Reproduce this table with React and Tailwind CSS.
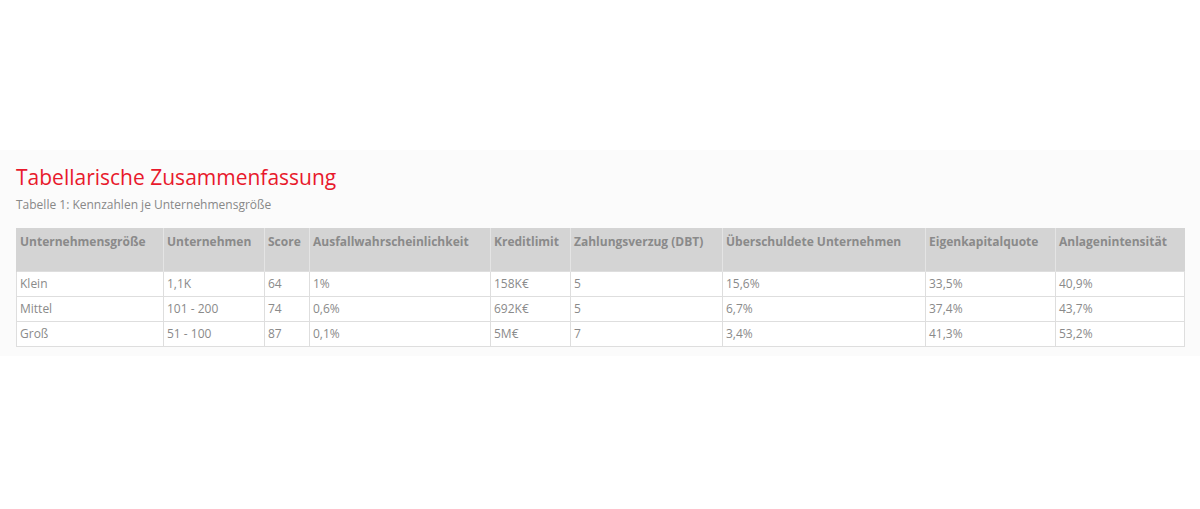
import React from 'react';

const cols = [
  { label: 'Unternehmensgröße', w: 'w-[147px]' },
  { label: 'Unternehmen', w: 'w-[101px]' },
  { label: 'Score', w: 'w-[45px]' },
  { label: 'Ausfallwahrscheinlichkeit', w: 'w-[181px]' },
  { label: 'Kreditlimit', w: 'w-[80px]' },
  { label: 'Zahlungsverzug (DBT)', w: 'w-[152px]' },
  { label: 'Überschuldete Unternehmen', w: 'w-[203px]' },
  { label: 'Eigenkapitalquote', w: 'w-[130px]' },
  { label: 'Anlagenintensität', w: 'w-[129px]' },
];

const rows = [
  ['Klein', '1,1K', '64', '1%', '158K€', '5', '15,6%', '33,5%', '40,9%'],
  ['Mittel', '101 - 200', '74', '0,6%', '692K€', '5', '6,7%', '37,4%', '43,7%'],
  ['Groß', '51 - 100', '87', '0,1%', '5M€', '7', '3,4%', '41,3%', '53,2%'],
];

const App = () => {
  return (
    <div className="w-[1200px] h-[509px] bg-white font-['Open_Sans',sans-serif] pt-[150px]">
      <div className="bg-[#fbfbfb] px-4 pt-[12px] pb-[9px]">
        <h2 className="text-[21px] leading-[30px] text-[#e8192c]">
          Tabellarische Zusammenfassung
        </h2>
        <p className="text-[12px] leading-[16px] text-[#888] mt-[5px]">
          Tabelle 1: Kennzahlen je Unternehmensgröße
        </p>

        <table className="table-fixed border-collapse w-[1168px] mt-[15px] text-[12px] text-[#8a8a8a] bg-white">
          <thead>
            <tr className="bg-[#d4d4d4] h-[43px]">
              {cols.map((c, i) => (
                <th
                  key={i}
                  className={`${c.w} align-top text-left font-bold px-[3px] pt-[5px] border-l border-[#e4e4e4] first:border-l-[#d4d4d4] whitespace-nowrap`}
                >
                  {c.label}
                </th>
              ))}
            </tr>
          </thead>
          <tbody>
            {rows.map((r, ri) => (
              <tr key={ri} className="h-[25px]">
                {r.map((v, ci) => (
                  <td key={ci} className="border border-[#dedede] px-[3px] align-middle">
                    {v}
                  </td>
                ))}
              </tr>
            ))}
          </tbody>
        </table>
      </div>
    </div>
  );
};

export default App;
